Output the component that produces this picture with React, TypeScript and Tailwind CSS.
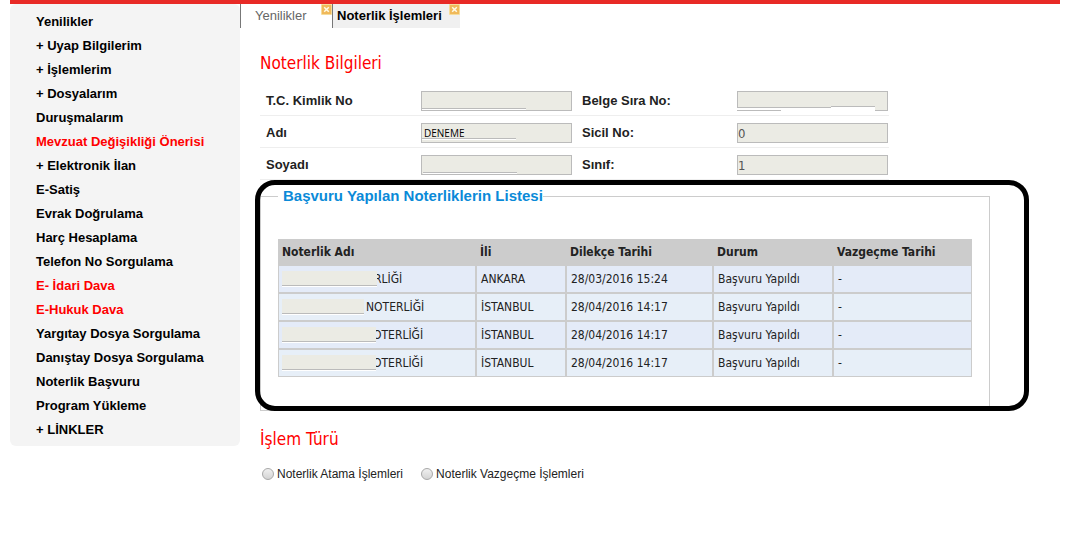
import React from "react";

type MenuEntry = { label: string; highlight?: boolean };

const menu: MenuEntry[] = [
  { label: "Yenilikler" },
  { label: "+ Uyap Bilgilerim" },
  { label: "+ İşlemlerim" },
  { label: "+ Dosyalarım" },
  { label: "Duruşmalarım" },
  { label: "Mevzuat Değişikliği Önerisi", highlight: true },
  { label: "+ Elektronik İlan" },
  { label: "E-Satiş" },
  { label: "Evrak Doğrulama" },
  { label: "Harç Hesaplama" },
  { label: "Telefon No Sorgulama" },
  { label: "E- İdari Dava", highlight: true },
  { label: "E-Hukuk Dava", highlight: true },
  { label: "Yargıtay Dosya Sorgulama" },
  { label: "Danıştay Dosya Sorgulama" },
  { label: "Noterlik Başvuru" },
  { label: "Program Yükleme" },
  { label: "+ LİNKLER" },
];

const applications = [
  { patch: "w-[95px]", name: "RLİĞİ", city: "ANKARA", date: "28/03/2016 15:24" },
  { patch: "w-[82px] mr-[5px]", name: "NOTERLİĞİ", city: "İSTANBUL", date: "28/04/2016 14:17" },
  { patch: "w-[94px]", name: "OTERLİĞİ", city: "İSTANBUL", date: "28/04/2016 14:17" },
  { patch: "w-[94px]", name: "OTERLİĞİ", city: "İSTANBUL", date: "28/04/2016 14:17" },
];

function CloseIcon() {
  return (
    <svg viewBox="0 0 11 11" className="block h-[11px] w-[11px]" aria-hidden="true">
      <rect width="11" height="11" rx="1" fill="#f6dc9a" />
      <rect x="1" y="1" width="9" height="9" fill="#f0b95a" />
      <path d="M3.2 3.2l4.6 4.6M7.8 3.2l-4.6 4.6" stroke="#fffbe8" strokeWidth="1.5" />
    </svg>
  );
}

function Tab({ label, active }: { label: string; active?: boolean }) {
  return (
    <div
      className={
        active
          ? "flex h-6 w-32 justify-between border-l border-[#777] bg-[#f0f0f0] font-bold text-black"
          : "flex h-6 w-[92px] justify-between border-l border-[#777] text-[#666]"
      }
    >
      <button type="button" className={active ? "pl-1 text-[13px] whitespace-nowrap" : "pl-[14px] text-[13px]"}>
        {label}
      </button>
      <button type="button" aria-label="Kapat" className="self-start">
        <CloseIcon />
      </button>
    </div>
  );
}

function Field({
  id,
  label,
  value = "",
  dark,
  children,
}: {
  id: string;
  label: string;
  value?: string;
  dark?: boolean;
  children?: React.ReactNode;
}) {
  return (
    <div className="flex items-center">
      <label htmlFor={id} className="w-[155px] shrink-0 text-[13px] font-bold text-[#222]">
        {label}
      </label>
      <div className="relative w-[151px]">
        <input
          id={id}
          readOnly
          defaultValue={value}
          className={
            dark
              ? "block h-5 w-full border border-[#bbb] bg-[#ebebe4] px-[2px] font-['Open_Sans',sans-serif] text-[10px] text-black"
              : "block h-5 w-full border border-[#bbb] bg-[#ebebe4] px-0 font-['DejaVu_Sans_Condensed','DejaVu_Sans',sans-serif] text-[13px] text-[#555]"
          }
        />
        {children}
      </div>
    </div>
  );
}

function FieldRow({ children }: { children: React.ReactNode }) {
  return <div className="flex h-8 items-end gap-[10px] border-b border-[#eee] pb-1 pl-[6px]">{children}</div>;
}

function RadioOption({ label, value }: { label: string; value: string }) {
  return (
    <label className="flex items-center gap-[3px] text-[12px] text-[#222]">
      <input
        type="radio"
        name="islem"
        value={value}
        className="h-3 w-3 appearance-none rounded-full border border-[#a8a8a8] bg-linear-to-b from-[#f0f0f0] to-[#d4d4d4] checked:bg-[#888]"
      />
      {label}
    </label>
  );
}

const th = "h-[26px] px-1 text-left align-middle font-bold";
const td = "h-7 border border-[#ccc] px-1 align-middle";

export default function App() {
  return (
    <div className="min-h-screen bg-white pl-[10px] pr-7 font-['Liberation_Sans',Arial,sans-serif]">
      <header className="h-1 bg-[#e82a26]" />
      <div className="flex items-start">
        <nav className="w-[230px] shrink-0 rounded-md bg-[#f4f4f4] pt-[6px] pb-1 pl-[26px]">
          <ul>
            {menu.map((m) => (
              <li key={m.label} className="h-6 text-[13px] leading-6 font-bold whitespace-nowrap">
                <a href="#" className={m.highlight ? "text-[#f00]" : "text-black"}>
                  {m.label}
                </a>
              </li>
            ))}
          </ul>
        </nav>

        <main className="min-w-0 flex-1">
          <div className="flex">
            <Tab label="Yenilikler" />
            <Tab label="Noterlik İşlemleri" active />
          </div>

          <div className="pl-5 pr-[70px]">
            <h2 className="mt-[23px] font-['DejaVu_Sans_Condensed','DejaVu_Sans',sans-serif] text-[17px] leading-6 text-[#f00]">
              Noterlik Bilgileri
            </h2>

            <div className="mt-[9px] w-[629px]">
              <FieldRow>
                <Field id="tc" label="T.C. Kimlik No">
                  <span className="absolute bottom-px left-px h-[2px] w-[104px] border-t border-[#bbb] bg-white" />
                </Field>
                <Field id="belge" label="Belge Sıra No:">
                  <span className="absolute bottom-px left-0 h-[3px] w-[94px] border-t border-[#bbb] bg-white" />
                  <span className="absolute bottom-0 left-[44px] h-[3px] w-[50px] bg-white" />
                  <span className="absolute bottom-0 left-[94px] h-[5px] w-[44px] border-t border-[#bbb] bg-white" />
                </Field>
              </FieldRow>
              <FieldRow>
                <Field id="adi" label="Adı" value="DENEME" dark>
                  <span className="absolute bottom-[3px] left-px h-[2px] w-[94px] border-t border-[#bbb] bg-white" />
                </Field>
                <Field id="sicil" label="Sicil No:" value="0" />
              </FieldRow>
              <FieldRow>
                <Field id="soyadi" label="Soyadı">
                  <span className="absolute bottom-px left-[2px] h-[2px] w-[94px] border-t border-[#bbb] bg-white" />
                </Field>
                <Field id="sinif" label="Sınıf:" value="1" />
              </FieldRow>
            </div>

            <section className="relative mt-2">
              <fieldset className="border border-[#ccc] px-[17px] pt-[35px] pb-[33px]">
                <legend className="pl-[5px] text-[15px] leading-4 font-bold text-[#0a8ad8]">
                  Başvuru Yapılan Noterliklerin Listesi
                </legend>
                <table className="w-full table-fixed border-separate border-spacing-0 font-['DejaVu_Sans_Condensed','DejaVu_Sans',sans-serif] text-[12px] leading-4 text-[#222]">
                  <colgroup>
                    <col className="w-[198px]" />
                    <col className="w-[90px]" />
                    <col className="w-[147px]" />
                    <col className="w-[120px]" />
                    <col />
                  </colgroup>
                  <thead className="bg-[#ccc]">
                    <tr>
                      <th className={th}>Noterlik Adı</th>
                      <th className={th}>İli</th>
                      <th className={th}>Dilekçe Tarihi</th>
                      <th className={th}>Durum</th>
                      <th className={th}>Vazgeçme Tarihi</th>
                    </tr>
                  </thead>
                  <tbody>
                    {applications.map((a, i) => (
                      <tr key={i} className="odd:bg-[#e4ebf8] even:bg-[#e7eff8]">
                        <td className="h-7 border border-[#ccc] px-[3px] align-middle">
                          <div className="flex items-center">
                            <span className={`relative z-10 h-4 shrink-0 border-b border-white ${a.patch}`}>
                              <span className="block h-[15px] border-b border-[#bbb] bg-[#ebebe4]" />
                            </span>
                            <span className="-ml-[3px]">{a.name}</span>
                          </div>
                        </td>
                        <td className={td}>{a.city}</td>
                        <td className={td}>{a.date}</td>
                        <td className={td}>Başvuru Yapıldı</td>
                        <td className={td}>-</td>
                      </tr>
                    ))}
                  </tbody>
                </table>
              </fieldset>
              <div className="pointer-events-none absolute -top-2 -right-[39px] bottom-0 -left-[5px] rounded-[20px] border-[5px] border-black" />
            </section>

            <h2 className="mt-4 font-['DejaVu_Sans_Condensed','DejaVu_Sans',sans-serif] text-[17px] leading-6 text-[#f00]">
              İşlem Türü
            </h2>
            <div className="mt-[13px] flex h-5 items-center gap-[18px] pl-[2px]">
              <RadioOption label="Noterlik Atama İşlemleri" value="atama" />
              <RadioOption label="Noterlik Vazgeçme İşlemleri" value="vazgecme" />
            </div>
          </div>
        </main>
      </div>
    </div>
  );
}
